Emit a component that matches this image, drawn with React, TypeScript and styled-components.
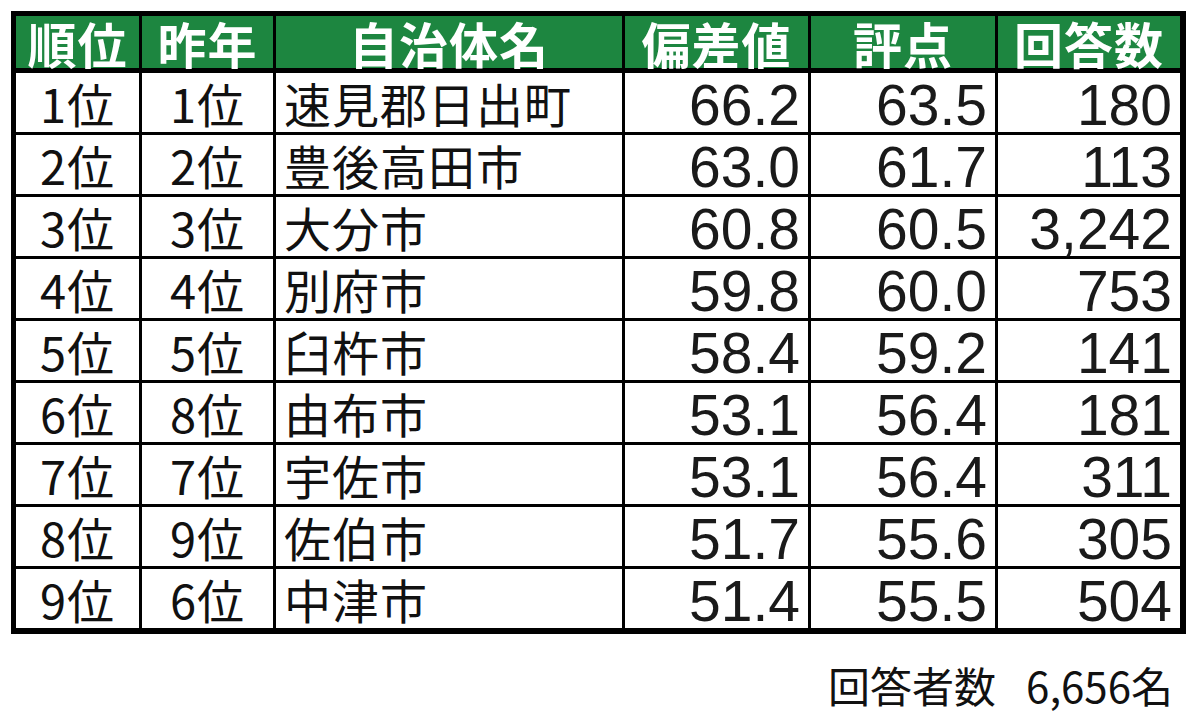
import styled, { createGlobalStyle } from 'styled-components';

const GlobalStyle = createGlobalStyle`
  html, body {
    margin: 0;
    padding: 0;
    background: #ffffff;
  }
  body {
    font-family: "Noto Sans CJK JP", "Liberation Sans", sans-serif;
    color: #111111;
  }
`;

const Page = styled.div`
  width: 1200px;
  height: 720px;
  padding: 11px 0 0 11px;
  box-sizing: border-box;
`;

const Grid = styled.div`
  display: grid;
  grid-template-columns: 123px 131px 346px 183px 184px 182px;
  grid-template-rows: 54px repeat(9, 59px);
  gap: 3px;
  width: fit-content;
  background: #000000;
  padding: 5px 6px 6px 5px;
`;

const HeadCell = styled.div`
  display: flex;
  align-items: center;
  justify-content: center;
  background: #1d8640;
  border-bottom: 2px solid #000000;
  color: #ffffff;
  font-family: "Noto Sans CJK JP", sans-serif;
  font-weight: 700;
  font-size: 49px;
  line-height: 1;
  letter-spacing: 1px;
  padding-top: 1px;
`;

const Cell = styled.div<{ $align: 'left' | 'center' | 'right' }>`
  display: flex;
  align-items: flex-end;
  justify-content: ${(p) =>
    p.$align === 'left' ? 'flex-start' : p.$align === 'right' ? 'flex-end' : 'center'};
  background: #ffffff;
  padding: 0 8px 3px;
`;

const JpText = styled.span`
  display: block;
  font-family: "Noto Sans CJK JP", sans-serif;
  font-size: 47px;
  line-height: 1.1;
  letter-spacing: 1px;
`;

const NumText = styled.span`
  display: block;
  font-family: "Liberation Sans", sans-serif;
  font-size: 57px;
  line-height: 0.8;
  color: #1a1a1a;
`;

const Footer = styled.div`
  display: flex;
  justify-content: flex-end;
  gap: 30px;
  width: 1162px;
  margin-top: 30px;
  font-family: "Noto Sans CJK JP", sans-serif;
  font-size: 42px;
  line-height: 1;
`;

interface Row {
  rank: string;
  prev: string;
  name: string;
  dev: string;
  score: string;
  count: string;
}

const rows: Row[] = [
  { rank: '1位', prev: '1位', name: '速見郡日出町', dev: '66.2', score: '63.5', count: '180' },
  { rank: '2位', prev: '2位', name: '豊後高田市', dev: '63.0', score: '61.7', count: '113' },
  { rank: '3位', prev: '3位', name: '大分市', dev: '60.8', score: '60.5', count: '3,242' },
  { rank: '4位', prev: '4位', name: '別府市', dev: '59.8', score: '60.0', count: '753' },
  { rank: '5位', prev: '5位', name: '臼杵市', dev: '58.4', score: '59.2', count: '141' },
  { rank: '6位', prev: '8位', name: '由布市', dev: '53.1', score: '56.4', count: '181' },
  { rank: '7位', prev: '7位', name: '宇佐市', dev: '53.1', score: '56.4', count: '311' },
  { rank: '8位', prev: '9位', name: '佐伯市', dev: '51.7', score: '55.6', count: '305' },
  { rank: '9位', prev: '6位', name: '中津市', dev: '51.4', score: '55.5', count: '504' },
];

const headers = ['順位', '昨年', '自治体名', '偏差値', '評点', '回答数'];

const App = () => {
  return (
    <Page>
      <GlobalStyle />
      <Grid>
        {headers.map((h) => (
          <HeadCell key={h}>{h}</HeadCell>
        ))}
        {rows.map((r) => [
          <Cell key={`${r.rank}-a`} $align="center">
            <JpText>{r.rank}</JpText>
          </Cell>,
          <Cell key={`${r.rank}-b`} $align="center">
            <JpText>{r.prev}</JpText>
          </Cell>,
          <Cell key={`${r.rank}-c`} $align="left">
            <JpText>{r.name}</JpText>
          </Cell>,
          <Cell key={`${r.rank}-d`} $align="right">
            <NumText>{r.dev}</NumText>
          </Cell>,
          <Cell key={`${r.rank}-e`} $align="right">
            <NumText>{r.score}</NumText>
          </Cell>,
          <Cell key={`${r.rank}-f`} $align="right">
            <NumText>{r.count}</NumText>
          </Cell>,
        ])}
      </Grid>
      <Footer>
        <span>回答者数</span>
        <span>6,656名</span>
      </Footer>
    </Page>
  );
};

export default App;
